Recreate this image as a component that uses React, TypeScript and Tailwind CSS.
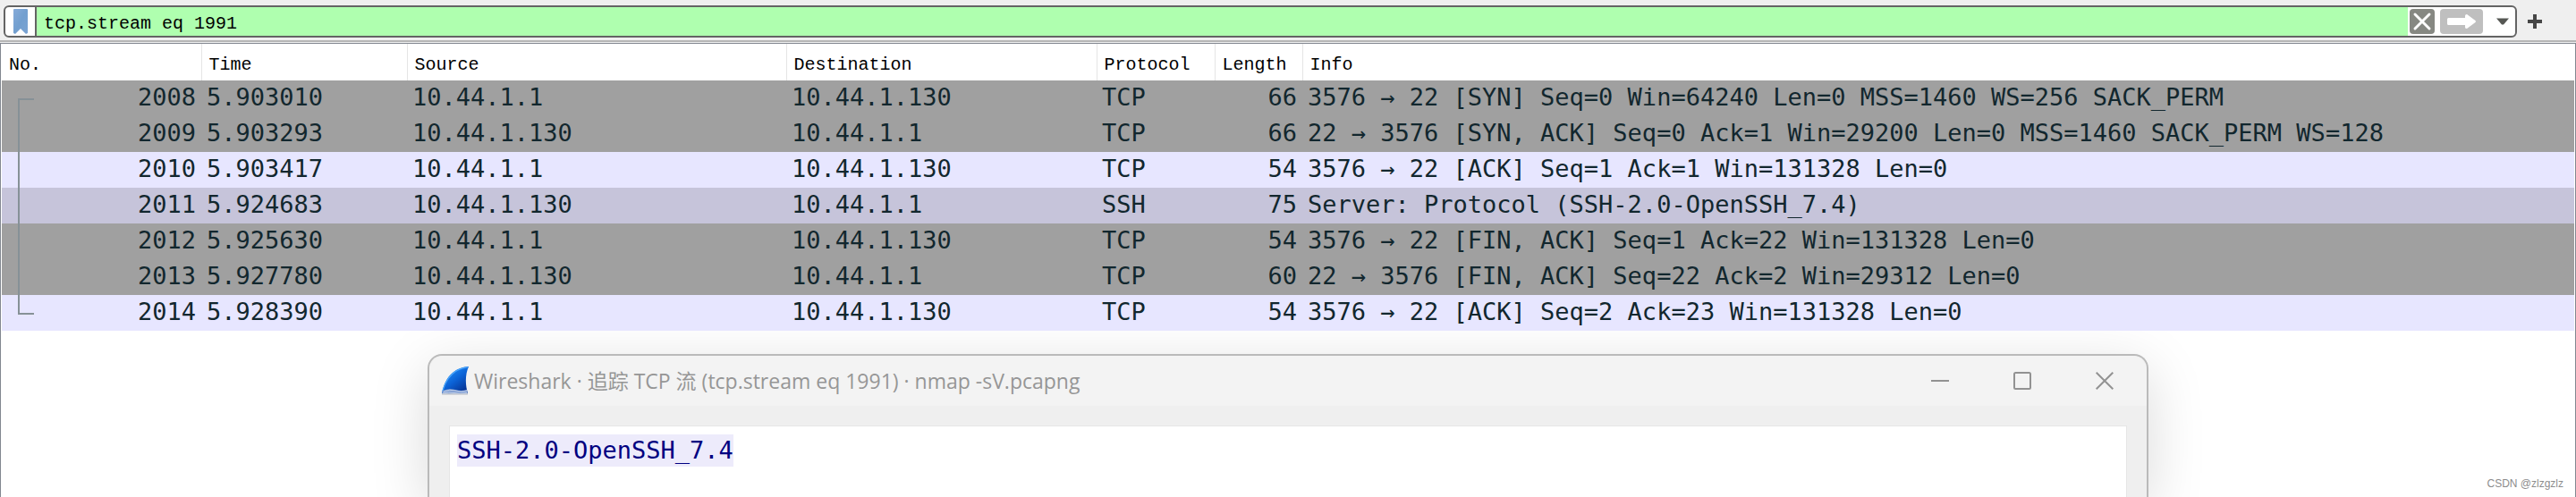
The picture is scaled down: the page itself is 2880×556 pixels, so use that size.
import type { ReactNode } from "react";

interface Packet {
  no: number;
  time: string;
  source: string;
  destination: string;
  protocol: string;
  length: number;
  info: string;
  color: string;
}

const GRAY = "bg-[#a0a0a0]";
const LAVENDER = "bg-[#e7e6ff]";
const SELECTED = "bg-[#c6c4da]";

const packets: Packet[] = [
  {
    no: 2008,
    time: "5.903010",
    source: "10.44.1.1",
    destination: "10.44.1.130",
    protocol: "TCP",
    length: 66,
    info: "3576 → 22 [SYN] Seq=0 Win=64240 Len=0 MSS=1460 WS=256 SACK_PERM",
    color: GRAY,
  },
  {
    no: 2009,
    time: "5.903293",
    source: "10.44.1.130",
    destination: "10.44.1.1",
    protocol: "TCP",
    length: 66,
    info: "22 → 3576 [SYN, ACK] Seq=0 Ack=1 Win=29200 Len=0 MSS=1460 SACK_PERM WS=128",
    color: GRAY,
  },
  {
    no: 2010,
    time: "5.903417",
    source: "10.44.1.1",
    destination: "10.44.1.130",
    protocol: "TCP",
    length: 54,
    info: "3576 → 22 [ACK] Seq=1 Ack=1 Win=131328 Len=0",
    color: LAVENDER,
  },
  {
    no: 2011,
    time: "5.924683",
    source: "10.44.1.130",
    destination: "10.44.1.1",
    protocol: "SSH",
    length: 75,
    info: "Server: Protocol (SSH-2.0-OpenSSH_7.4)",
    color: SELECTED,
  },
  {
    no: 2012,
    time: "5.925630",
    source: "10.44.1.1",
    destination: "10.44.1.130",
    protocol: "TCP",
    length: 54,
    info: "3576 → 22 [FIN, ACK] Seq=1 Ack=22 Win=131328 Len=0",
    color: GRAY,
  },
  {
    no: 2013,
    time: "5.927780",
    source: "10.44.1.130",
    destination: "10.44.1.1",
    protocol: "TCP",
    length: 60,
    info: "22 → 3576 [FIN, ACK] Seq=22 Ack=2 Win=29312 Len=0",
    color: GRAY,
  },
  {
    no: 2014,
    time: "5.928390",
    source: "10.44.1.1",
    destination: "10.44.1.130",
    protocol: "TCP",
    length: 54,
    info: "3576 → 22 [ACK] Seq=2 Ack=23 Win=131328 Len=0",
    color: LAVENDER,
  },
];

const columns = [
  { name: "No.", width: "w-[223px]" },
  { name: "Time", width: "w-[230px]" },
  { name: "Source", width: "w-[424px]" },
  { name: "Destination", width: "w-[347px]" },
  { name: "Protocol", width: "w-[132px]" },
  { name: "Length", width: "w-[98px]" },
  { name: "Info", width: "" },
];

const FilterBar = () => {
  return (
    <div className="flex items-center border-b-2 border-[#b6b6b6] bg-[#efefef] pt-1.5 pb-[3px] pl-1">
      <div className="flex h-9 flex-1 items-stretch overflow-hidden rounded-md border-2 border-[#646464] bg-white">
        <button
          aria-label="Bookmarks"
          className="flex w-[35px] items-center justify-center border-r-2 border-[#646464]"
        >
          <svg width="16" height="28" viewBox="0 0 16 28">
            <defs>
              <linearGradient id="bookmark" x1="0" y1="0" x2="1" y2="1">
                <stop offset="0" stopColor="#86abd9" />
                <stop offset="0.5" stopColor="#729fcf" />
                <stop offset="1" stopColor="#7ba4d3" />
              </linearGradient>
            </defs>
            <path
              d="M1 0h14a1 1 0 0 1 1 1v26l-2 1-6-6-6 6-2-1V1a1 1 0 0 1 1-1z"
              fill="url(#bookmark)"
            />
          </svg>
        </button>
        <input
          aria-label="Display filter"
          defaultValue="tcp.stream eq 1991"
          className="min-w-0 flex-1 bg-[#afffaf] pt-1.5 pl-2 font-['Liberation_Mono',monospace] text-[20px] text-black outline-none"
        />
        <div className="flex items-center pl-0.5">
          <button aria-label="Clear filter">
            <svg width="28" height="28" viewBox="0 0 28 28">
              <rect width="28" height="28" rx="4" fill="#868882" />
              <path
                d="M6 6l16 16M22 6L6 22"
                stroke="#fff"
                strokeWidth="3"
                strokeLinecap="round"
              />
            </svg>
          </button>
          <button aria-label="Apply filter" className="ml-1.5">
            <svg width="48" height="28" viewBox="0 0 48 28">
              <rect width="48" height="28" rx="4" fill="#bfbfbf" />
              <path
                d="M9.500 10H28V7.500Q28 6 30 6L39.500 13Q40.500 14 39.500 15L30 22Q28 22 28 20.500V18H9.500Q8 18 8 16.500V11.500Q8 10 9.500 10z"
                fill="#fff"
              />
            </svg>
          </button>
          <button aria-label="Recent filters" className="mr-1.5 ml-3.5">
            <svg width="16" height="28" viewBox="0 0 16 28">
              <path d="M1 10.500h14l-6 7h-2z" fill="#555753" />
            </svg>
          </button>
        </div>
      </div>
      <button
        aria-label="Add filter button"
        className="flex w-[66px] items-center pl-3"
      >
        <svg width="16" height="16" viewBox="0 0 16 16">
          <path d="M8 0v16M0 8h16" stroke="#464646" strokeWidth="4" />
        </svg>
      </button>
    </div>
  );
};

const PacketTable = () => {
  return (
    <div className="relative">
      <table className="w-full table-fixed border-collapse">
        <thead>
          <tr className="h-[41px] bg-white text-left font-['Liberation_Mono',monospace] text-[20px] text-black">
            {columns.map((column) => (
              <th
                key={column.name}
                className={`${column.width} border-r border-[#e5e5e5] p-0 pt-1.5 pl-2 leading-[24px] font-normal last:border-r-0`}
              >
                {column.name}
              </th>
            ))}
          </tr>
        </thead>
        <tbody className="font-['DejaVu_Sans_Mono',monospace] text-[27px] leading-[38px] whitespace-nowrap text-[#12272e]">
          {packets.map((packet) => (
            <tr key={packet.no} className={`h-10 ${packet.color}`}>
              <td className="p-0 pr-1.5 pb-0.5 text-right">{packet.no}</td>
              <td className="p-0 pb-0.5 pl-1.5">{packet.time}</td>
              <td className="p-0 pb-0.5 pl-1.5">{packet.source}</td>
              <td className="p-0 pb-0.5 pl-1.5">{packet.destination}</td>
              <td className="p-0 pb-0.5 pl-1.5">{packet.protocol}</td>
              <td className="p-0 pr-1.5 pb-0.5 text-right">{packet.length}</td>
              <td className="p-0 pb-0.5 pl-1.5">{packet.info}</td>
            </tr>
          ))}
        </tbody>
      </table>
      {/* conversation bracket, first to last packet of the stream */}
      <div className="pointer-events-none absolute top-[61px] bottom-[18px] left-[18px] w-[18px] border-y-2 border-l-2 border-[#869197]" />
    </div>
  );
};

const SharkFin = () => {
  return (
    <svg width="30" height="32" viewBox="0 0 30 32" className="shrink-0">
      <defs>
        <linearGradient id="fin" x1="0.2" y1="0.1" x2="0.9" y2="1">
          <stop offset="0" stopColor="#1f8cf5" />
          <stop offset="0.45" stopColor="#0b62d6" />
          <stop offset="1" stopColor="#062a86" />
        </linearGradient>
      </defs>
      <path d="M0 30C3 14 12 1 30 0C26 9 26 20 29 30z" fill="url(#fin)" />
      <path
        d="M1 27C5 13 13 2.500 29 .8"
        fill="none"
        stroke="#4aa5fa"
        strokeWidth="1.200"
      />
      <path d="M1 27q7-3 14-1t13 0l1 4.500H0z" fill="#7d9bd0" />
      <path
        d="M2 28q7-3 13-1t13 0M1 30q7-2 13-.5t14 0"
        fill="none"
        stroke="#d5e0f2"
        strokeWidth="0.800"
      />
      <path d="M0 31h29" stroke="#b9bcc2" strokeWidth="1" />
    </svg>
  );
};

const WindowButton = ({
  label,
  children,
}: {
  label: string;
  children: ReactNode;
}) => {
  return (
    <button
      aria-label={label}
      className="flex h-14 w-[92px] items-center justify-center"
    >
      <svg
        width="20"
        height="20"
        viewBox="0 0 20 20"
        fill="none"
        stroke="#929292"
        strokeWidth="2"
      >
        {children}
      </svg>
    </button>
  );
};

const StreamWindow = () => {
  return (
    <section className="mx-auto mt-[26px] flex w-[1924px] max-w-full flex-1 flex-col rounded-t-2xl border-2 border-b-0 border-[#bababa] bg-[#efefef] shadow-[0_16px_64px_rgba(0,0,0,0.15)]">
      <header className="flex h-14 items-center rounded-t-2xl bg-[#f3f3f3] pr-px pb-px pl-3.5">
        <SharkFin />
        <h1 className="ml-1.5 flex-1 font-['Open_Sans','Noto_Sans_CJK_SC',sans-serif] text-[23px] leading-[32px] whitespace-nowrap text-[#969696]">
          Wireshark · 追踪 TCP 流 (tcp.stream eq 1991) · nmap -sV.pcapng
        </h1>
        <WindowButton label="Minimize">
          <path d="M0 10h20" />
        </WindowButton>
        <WindowButton label="Maximize">
          <rect x="1" y="1" width="18" height="18" rx="1.500" />
        </WindowButton>
        <WindowButton label="Close">
          <path d="M.7.7l18.600 18.600M19.300.7L.7 19.300" />
        </WindowButton>
      </header>
      <div className="mx-[22px] mt-[22px] flex-1 border border-b-0 border-[#e6e6e6] bg-white pt-[9px] pl-2">
        <span className="inline-block bg-[#edebfb] font-['DejaVu_Sans_Mono',monospace] text-[27px] leading-[36px] text-[#000080]">
          SSH-2.0-OpenSSH_7.4
        </span>
      </div>
    </section>
  );
};

export default function App() {
  return (
    <div className="relative flex min-h-screen flex-col overflow-hidden bg-[#efefef]">
      <FilterBar />
      <main className="mt-px flex flex-1 flex-col border-x border-t border-[#828790] bg-white px-px">
        <PacketTable />
        <StreamWindow />
      </main>
      <p className="absolute right-3.5 bottom-1.5 font-['Liberation_Sans',sans-serif] text-[12px] leading-[18px] text-[#8c8c8c]">
        CSDN @zlzgzlz
      </p>
    </div>
  );
}
